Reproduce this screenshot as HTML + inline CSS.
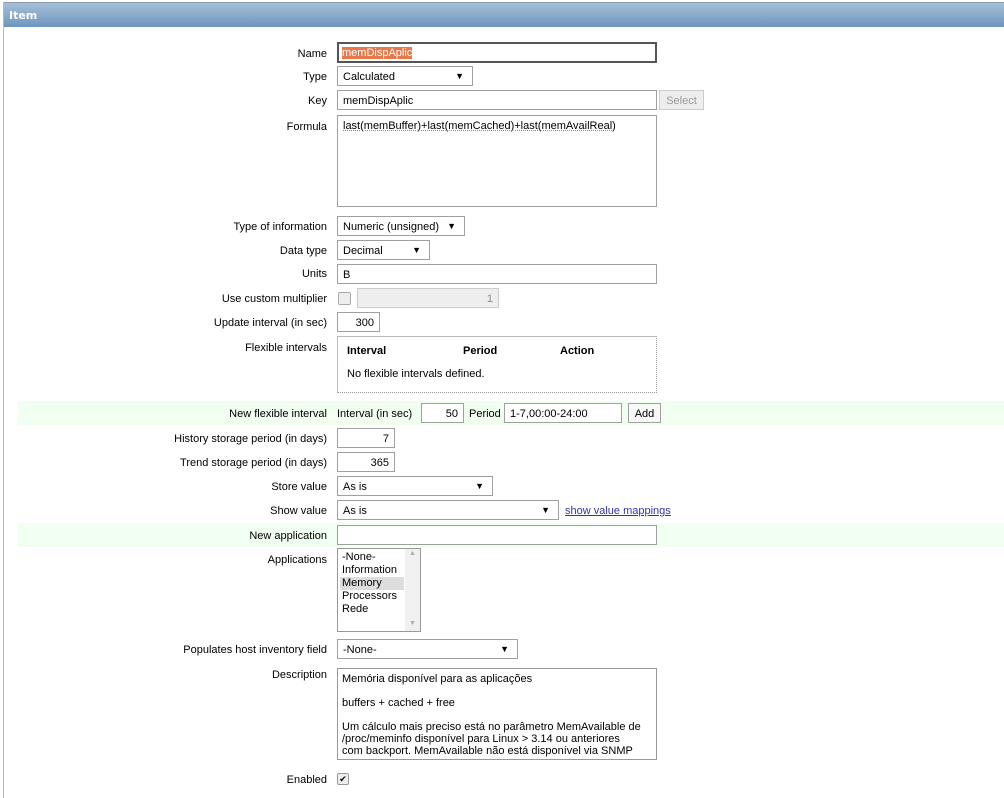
<!DOCTYPE html>
<html><head><meta charset="utf-8"><style>
body{margin:0;width:1004px;height:798px;background:#fff;font-family:"Liberation Sans",Arial,sans-serif;font-size:11px;color:#000;position:relative;overflow:hidden}
.a{position:absolute}
.hdr{left:4px;top:2px;width:1000px;height:25px;background:linear-gradient(#a5bfd8,#6e96bf);border-top:1px solid #8a9aae;box-sizing:border-box}
.hdr span{position:absolute;left:5px;top:6px;color:#fff;font-weight:bold;font-family:"DejaVu Sans",sans-serif;font-size:11px}
.lb{position:absolute;right:677px;text-align:right;white-space:nowrap;margin-top:1px}
.in{position:absolute;border:1px solid #a0a0a0;background:#fff;box-sizing:border-box;height:20px;padding:4px 5px 2px;white-space:nowrap}
.r{text-align:right}
.sel::after{content:"▼";position:absolute;right:8px;top:4px;font-size:9px}
.green{position:absolute;left:18px;width:986px;height:24px;background:#f0fff0}
.btn{position:absolute;border:1px solid #a0a0a0;background:#f8f8f8;box-sizing:border-box;height:20px;padding:4px 0 2px;text-align:center}
</style></head><body>
<div class="a" style="left:3px;top:2px;width:1px;height:796px;background:#b0b8c4"></div>
<div class="a hdr"><span>Item</span></div>

<div class="lb" style="top:47px">Name</div>
<div class="in" style="left:337px;top:42px;width:320px;height:21px;border:2px solid #555;padding:3px 3px"><span style="background:#e8774a;color:#fff">memDispAplic</span></div>

<div class="lb" style="top:70px">Type</div>
<div class="in sel" style="left:337px;top:66px;width:136px">Calculated</div>

<div class="lb" style="top:94px">Key</div>
<div class="in" style="left:337px;top:90px;width:320px">memDispAplic</div>
<div class="btn" style="left:659px;top:90px;width:45px;color:#999;background:#eee;border-color:#ccc">Select</div>

<div class="lb" style="top:120px">Formula</div>
<div class="in" style="left:337px;top:115px;width:320px;height:92px;text-decoration:underline dotted #d66;text-decoration-thickness:1px">last(memBuffer)+last(memCached)+last(memAvailReal)</div>

<div class="lb" style="top:220px">Type of information</div>
<div class="in sel" style="left:337px;top:216px;width:128px">Numeric (unsigned)</div>

<div class="lb" style="top:244px">Data type</div>
<div class="in sel" style="left:337px;top:240px;width:93px">Decimal</div>

<div class="lb" style="top:267px">Units</div>
<div class="in" style="left:337px;top:264px;width:320px">B</div>

<div class="lb" style="top:292px">Use custom multiplier</div>
<div class="a" style="left:338px;top:292px;width:11px;height:11px;border:1px solid #aaa;border-radius:2px;background:#eee"></div>
<div class="in r" style="left:357px;top:288px;width:142px;background:#eee;border-color:#ccc;color:#888">1</div>

<div class="lb" style="top:316px">Update interval (in sec)</div>
<div class="in r" style="left:337px;top:312px;width:43px">300</div>

<div class="lb" style="top:341px">Flexible intervals</div>
<div class="a" style="left:337px;top:336px;width:320px;height:57px;border:1px solid #bbb;border-bottom:1px dotted #999;border-right:1px dotted #999;box-sizing:border-box">
<b class="a" style="left:9px;top:8px">Interval</b><b class="a" style="left:125px;top:8px">Period</b><b class="a" style="left:222px;top:8px">Action</b>
<div class="a" style="left:9px;top:31px">No flexible intervals defined.</div></div>

<div class="green" style="top:401px"></div>
<div class="lb" style="top:407px">New flexible interval</div>
<div class="a" style="left:337px;top:408px">Interval (in sec)</div>
<div class="in r" style="left:421px;top:403px;width:43px">50</div>
<div class="a" style="left:469px;top:408px">Period</div>
<div class="in" style="left:504px;top:403px;width:118px">1-7,00:00-24:00</div>
<div class="btn" style="left:628px;top:403px;width:33px">Add</div>

<div class="lb" style="top:432px">History storage period (in days)</div>
<div class="in r" style="left:337px;top:428px;width:58px">7</div>

<div class="lb" style="top:456px">Trend storage period (in days)</div>
<div class="in r" style="left:337px;top:452px;width:58px">365</div>

<div class="lb" style="top:480px">Store value</div>
<div class="in sel" style="left:337px;top:476px;width:156px">As is</div>

<div class="lb" style="top:504px">Show value</div>
<div class="in sel" style="left:337px;top:500px;width:222px">As is</div>
<div class="a" style="left:565px;top:505px;color:#3333aa;text-decoration:underline">show value mappings</div>

<div class="green" style="top:523px"></div>
<div class="lb" style="top:529px">New application</div>
<div class="in" style="left:337px;top:525px;width:320px"></div>

<div class="lb" style="top:553px">Applications</div>
<div class="a" style="left:337px;top:548px;width:84px;height:84px;border:1px solid #999;box-sizing:border-box;line-height:13px;padding:2px 0 0 4px">
-None-<br>Information<br><span style="background:#ddd;display:inline-block;width:62px;margin-left:-2px;padding-left:2px">Memory</span><br>Processors<br>Rede
<div class="a" style="right:0;top:0;width:15px;height:82px;background:#f0f0f0;color:#aaa;font-size:7px;text-align:center;line-height:10px">▲<br><span style="position:absolute;bottom:2px;left:4px">▼</span></div></div>

<div class="lb" style="top:643px">Populates host inventory field</div>
<div class="in sel" style="left:337px;top:639px;width:181px">-None-</div>

<div class="lb" style="top:668px">Description</div>
<div class="a" style="left:337px;top:668px;width:320px;height:92px;border:1px solid #999;box-sizing:border-box;padding:4px 4px;line-height:12px;white-space:nowrap">Memória disponível para as aplicações<br><br>buffers + cached + free<br><br>Um cálculo mais preciso está no parâmetro MemAvailable de<br>/proc/meminfo disponível para Linux &gt; 3.14 ou anteriores<br>com backport. MemAvailable não está disponível via SNMP</div>

<div class="lb" style="top:773px">Enabled</div>
<div class="a" style="left:337px;top:773px;width:10px;height:10px;border:1px solid #999;border-radius:2px;background:#eee;font-size:9px;line-height:10px;text-align:center">✔</div>
</body></html>
